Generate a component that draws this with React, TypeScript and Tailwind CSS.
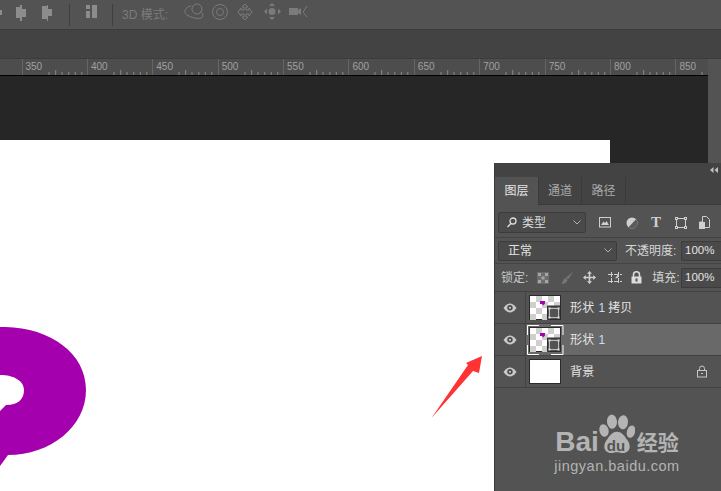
import React from 'react'

const cjk = "font-['Liberation_Sans','Noto_Sans_CJK_SC',sans-serif]"

const rulerMarks = [350, 400, 450, 500, 550, 600, 650, 700, 750, 800, 850]

const RulerSegment = ({ value }: { value: number }) => (
  <div className="relative h-full w-[65.4px] shrink-0 border-l border-[#656565]">
    <span className="absolute left-[3px] top-[1px] text-[10px] leading-[14px] text-[#a0a0a0]">{value}</span>
    <svg className="absolute bottom-0 left-0" width="65" height="6">
      {[6.5, 13, 19.5, 26, 32.7, 39, 45.8, 52.3, 58.8].map((x, i) =>
        i < 3 ? null : <line key={x} x1={x} x2={x} y1={i === 4 ? 1 : 3} y2={6} stroke="#8a8a8a" />
      )}
    </svg>
  </div>
)

const ToolbarIcons = () => (
  <svg className="absolute left-0 top-0" width="320" height="29" fill="none">
    <g fill="#8c8c8c">
      <rect x="0" y="10" width="2" height="5" />
      <rect x="16" y="7" width="4" height="11" />
      <rect x="22" y="9" width="4" height="8" />
      <rect x="20" y="5" width="2" height="16" />
      <rect x="42" y="6" width="5" height="13" />
      <rect x="48" y="9" width="4" height="7" />
      <rect x="47" y="5" width="1" height="16" />
      <rect x="86" y="5" width="4" height="4" />
      <rect x="86" y="11" width="4" height="7" />
      <rect x="92" y="5" width="5" height="13" />
    </g>
    <g stroke="#7b7b7b">
      <circle cx="197" cy="9" r="5" />
      <path d="M191 6c-6 1-8 6-4 9l4 2c3 1 7 2 10 1 3-1 2-5-1-6" />
      <circle cx="220" cy="12" r="7.500" />
      <circle cx="220" cy="12" r="3.500" />
      <path d="M245 4l3 3h-2v3h3V8l3 4-3 4v-2h-3v3h2l-3 3-3-3h2v-3h-3v2l-3-4 3-4v2h3V7h-2z" />
    </g>
    <g fill="#7b7b7b">
      <path d="M272 3l3 3h-6zM272 20l3-3h-6zM264 11.500l3-3v6zM281 11.500l-3-3v6z" />
      <circle cx="272" cy="11.500" r="3.500" />
      <rect x="289" y="8" width="9" height="7" />
      <path d="M298 10l3-2v7l-3-2z" />
    </g>
    <path d="M307 6l-4 6 4 5" stroke="#7b7b7b" />
  </svg>
)

const Eye = () => (
  <svg width="14" height="10" viewBox="0 0 14 10">
    <path d="M0.500 5C3 1.500 5 0.500 7 0.500S11 1.500 13.500 5C11 8.500 9 9.500 7 9.500S3 8.500 0.500 5z" fill="#c9c9c9" />
    <circle cx="7" cy="4.800" r="2.700" fill="#4a4a4a" />
    <circle cx="7" cy="4.800" r="1.100" fill="#c9c9c9" />
  </svg>
)

const ShapeThumb = ({ selected }: { selected?: boolean }) => {
  const squares: React.ReactNode[] = []
  for (let r = 0; r < 4; r++) {
    for (let c = 0; c < 5; c++) {
      if ((r + c) % 2 === 1) {
        squares.push(<rect key={`${r}-${c}`} x={1 + c * 6} y={1 + r * 6} width="6" height="6" fill="#cfcfcf" />)
      }
    }
  }
  return (
    <div className="relative h-[26px] w-[33px]">
      <svg width="33" height="26" className="absolute left-0 top-0">
        <rect x="0.500" y="0.500" width="31" height="24" fill="#fff" stroke="#2b2b2b" />
        {squares}
        <path d="M11 6h5v2.500l-2 2-1-1.500h-2z" fill="#a400ad" />
        <path d="M18.500 24.500v-13.500h13v13.500z" fill="#535353" stroke="#2b2b2b" />
        <rect x="20.500" y="13.500" width="9" height="9" fill="none" stroke="#bdbdbd" />
        {[[20.500, 13.500], [29.500, 13.500], [20.500, 22.500], [29.500, 22.500]].map(([x, y]) => (
          <rect key={`${x}${y}`} x={x - 1} y={y - 1} width="2" height="2" fill="#d8d8d8" />
        ))}
      </svg>
      {selected && (
        <svg width="37" height="30" className="absolute -left-[2px] -top-[2px]" fill="none" stroke="#fff">
          <path d="M0.500 10V0.500H12M24 0.500H36V10M0.500 20V29.500H12M24 29.500H36V20" />
        </svg>
      )}
    </div>
  )
}

const LayerRow = ({
  selected,
  label,
  suffix,
  thumb,
  lock,
}: {
  selected?: boolean
  label: string
  suffix?: React.ReactNode
  thumb: React.ReactNode
  lock?: boolean
}) => (
  <div className={`flex h-[32px] items-center border-b border-[#414141] ${selected ? 'bg-[#696969]' : 'bg-[#535353]'}`}>
    <div className="flex h-full w-[31px] shrink-0 items-center justify-center border-r border-[#434343] bg-[#535353] pr-[1px]">
      <Eye />
    </div>
    <div className="ml-[3px] w-[41px] shrink-0">{thumb}</div>
    <span className="text-[12px] tracking-[0.3px] text-[#e4e4e4]">{label}</span>
    {suffix}
    {lock && (
      <svg className="ml-auto mr-[13px]" width="12" height="13" viewBox="0 0 12 13" fill="none" stroke="#c8c8c8">
        <rect x="1.500" y="5.500" width="9" height="6.500" />
        <path d="M3.500 5.500V3.500a2.500 2.500 0 015 0v2M5 8.500h2" />
      </svg>
    )}
  </div>
)

const FilterIcons = () => (
  <div className="ml-[13px] flex items-center gap-[11px]">
    <svg width="13" height="11" viewBox="0 0 13 11" fill="none">
      <rect x="0.500" y="0.500" width="11" height="9.500" stroke="#cfcfcf" />
      <path d="M2 8l2.500-3.500L6 6l1.500-2L10 8z" fill="#cfcfcf" />
    </svg>
    <svg className="ml-[3px]" width="12" height="12" viewBox="0 0 12 12">
      <circle cx="6" cy="6" r="5.500" fill="#cfcfcf" />
      <path d="M10 2.200A5.500 5.500 0 012.500 10.200z" fill="#5a5a5a" />
    </svg>
    <span className="ml-[2px] w-[13px] font-['Liberation_Serif',serif] text-[15px] font-bold leading-none text-[#cfcfcf]">T</span>
    <svg width="13" height="12" viewBox="0 0 13 12" fill="none" stroke="#cfcfcf">
      <rect x="1.500" y="1.500" width="9" height="9" />
      <rect x="0.500" y="0.500" width="2" height="2" fill="#535353" />
      <rect x="9.500" y="0.500" width="2" height="2" fill="#535353" />
      <rect x="0.500" y="9.500" width="2" height="2" fill="#535353" />
      <rect x="9.500" y="9.500" width="2" height="2" fill="#535353" />
    </svg>
    <svg width="11" height="13" viewBox="0 0 11 13">
      <path d="M3.500 0.500h4l3 3v8h-10V6h3z" fill="none" stroke="#cfcfcf" />
      <rect x="0" y="6" width="6" height="7" fill="#cfcfcf" />
    </svg>
  </div>
)

const LockIcons = () => (
  <div className="ml-[9px] flex items-center gap-[9px]">
    <svg width="12" height="12" viewBox="0 0 12 12">
      <rect width="12" height="12" fill="#6d6d6d" />
      <path d="M1 1h3v3H1zM8 1h3v3H8zM4.500 4.500h3v3h-3zM1 8h3v3H1zM8 8h3v3H8z" fill="#a5a5a5" />
    </svg>
    <svg className="ml-[3px]" width="13" height="14" viewBox="0 0 13 14">
      <path d="M12.500 0.500L5 6.500L7 8.500zM4.500 7L6.500 9C6 12 3 13.500 0.500 13C2 11.500 1.500 8 4.500 7z" fill="#757575" />
    </svg>
    <svg width="13" height="13" viewBox="0 0 13 13" fill="#cfcfcf">
      <path d="M6.500 0L9 2.800H7.300v2.900h2.900V4L13 6.500 10.200 9V7.300H7.300v2.900H9L6.500 13 4 10.200h1.700V7.300H2.800V9L0 6.500 2.800 4v1.700h2.900V2.800H4z" />
    </svg>
    <svg className="ml-[3px]" width="14" height="12" viewBox="0 0 14 12" fill="none" stroke="#cfcfcf">
      <path d="M0 2.500h14M0 9.500h14M3.500 0v12M10.500 0v12" strokeDasharray="5 1" />
      <path d="M7 6.500L10 2.500V6z" fill="#cfcfcf" stroke="none" />
    </svg>
    <svg width="11" height="13" viewBox="0 0 11 13">
      <path d="M2.500 6V3.800a3 3 0 016 0V6" fill="none" stroke="#dcdcdc" strokeWidth="1.500" />
      <rect x="0.500" y="5.500" width="10" height="7" fill="#dcdcdc" />
      <rect x="4.500" y="7.500" width="2" height="3" fill="#535353" />
    </svg>
  </div>
)

const BaiduMark = () => (
  <div className="absolute left-[57px] top-[251px] flex w-[130px] flex-col items-center text-[#b4b4b4]">
    <div className="flex h-[40px] items-end">
      <span className="-mb-px font-['Liberation_Sans',sans-serif] text-[28px] font-bold leading-[26px]">Bai</span>
      <div className="relative -ml-[1px] h-[40px] w-[37px]">
        <svg width="37" height="40" viewBox="0 0 37 34" preserveAspectRatio="none" fill="#b4b4b4" className="absolute left-0 top-0">
          <ellipse cx="14" cy="6.500" rx="5" ry="6" transform="rotate(-8 14 6.500)" />
          <ellipse cx="25" cy="7" rx="5" ry="6" transform="rotate(8 25 7)" />
          <ellipse cx="6" cy="14" rx="4.500" ry="5.500" transform="rotate(-25 6 14)" />
          <ellipse cx="33" cy="15" rx="4" ry="5.500" transform="rotate(25 33 15)" />
          <path d="M19 15c5 0 8 4 11 8 3 4 2 9-3 10-3 .500-5-.500-8-.500s-5 1-8 .500c-5-1-6-6-3-10 3-4 6-8 11-8z" />
        </svg>
        <span className="absolute left-[9px] top-[25px] font-['Liberation_Sans',sans-serif] text-[15px] font-bold leading-[13px] text-[#535353]">du</span>
      </div>
      <span className={`${cjk} -mb-px ml-[2px] text-[21px] font-bold leading-[24px]`}>经验</span>
    </div>
    <span className="mt-[4px] whitespace-nowrap font-['Liberation_Sans',sans-serif] text-[14.500px] leading-[16px] tracking-[0.5px]">jingyan.baidu.com</span>
  </div>
)

const LayersPanel = () => (
  <div className={`${cjk} absolute left-[494px] top-[163px] h-[328px] w-[227px] border-l border-[#3a3a3a] bg-[#535353]`}>
    <div className="flex h-[14px] items-center justify-end bg-[#434343] pr-[3px]">
      <svg width="8" height="6" viewBox="0 0 8 6" fill="#c0c0c0">
        <path d="M3.500 0v6L0 3zM8 0v6L4.500 3z" />
      </svg>
    </div>
    <div className="flex h-[28px] border-b border-[#3a3a3a] bg-[#434343] text-[12px]">
      <div className="-mb-px flex w-[44px] items-center justify-center border-r border-[#3a3a3a] bg-[#535353] text-[#e6e6e6]">图层</div>
      <div className="flex w-[43px] items-center justify-center border-r border-[#3a3a3a] text-[#aaaaaa]">通道</div>
      <div className="flex w-[44px] items-center justify-center border-r border-[#3a3a3a] text-[#aaaaaa]">路径</div>
    </div>
    <div className="flex h-[33px] items-center border-b border-[#434343] pl-[3px] pt-[3px]">
      <div className="flex h-[21px] w-[88px] items-center rounded-[2px] border border-[#3c3c3c] bg-[#4a4a4a] pl-[8px] text-[12px] text-[#dddddd]">
        <svg width="10" height="11" viewBox="0 0 10 11" fill="none" stroke="#dddddd" strokeWidth="1.300">
          <circle cx="6" cy="4" r="3" />
          <path d="M4 6.500L0.500 10" />
        </svg>
        <span className="ml-[5px]">类型</span>
        <svg className="ml-auto mr-[4px]" width="8" height="5" fill="none" stroke="#b0b0b0"><path d="M0.500 0.500L4 4l3.500-3.500" /></svg>
      </div>
      <FilterIcons />
    </div>
    <div className="flex h-[26px] items-center border-b border-[#434343] pl-[3px]">
      <div className="flex h-[20px] w-[119px] items-center rounded-[2px] border border-[#3c3c3c] bg-[#4a4a4a] pl-[9px] text-[12px] text-[#e4e4e4]">
        正常
        <svg className="ml-auto mr-[4px]" width="8" height="5" fill="none" stroke="#b0b0b0"><path d="M0.500 0.500L4 4l3.500-3.500" /></svg>
      </div>
      <span className="ml-[8px] whitespace-nowrap text-[12px] text-[#d6d6d6]">不透明度:</span>
      <div className="ml-auto flex h-[20px] w-[40px] items-center rounded-l-[2px] border border-r-0 border-[#3c3c3c] bg-[#4a4a4a] pl-[3px] font-['Liberation_Sans',sans-serif] text-[11.500px] text-[#e4e4e4]">100%</div>
    </div>
    <div className="flex h-[28px] items-center border-b border-[#414141] pl-[6px]">
      <span className="whitespace-nowrap text-[12px] text-[#c8c8c8]">锁定:</span>
      <LockIcons />
      <span className="ml-[10px] whitespace-nowrap text-[12px] text-[#d6d6d6]">填充:</span>
      <div className="ml-auto flex h-[20px] w-[40px] items-center rounded-l-[2px] border border-r-0 border-[#3c3c3c] bg-[#4a4a4a] pl-[3px] font-['Liberation_Sans',sans-serif] text-[11.500px] text-[#e4e4e4]">100%</div>
    </div>
    <LayerRow label="形状" suffix={<span className="ml-[4px] text-[12px] text-[#c5dcff]">1<span className="ml-[3px] text-[#e4e4e4]">拷贝</span></span>} thumb={<ShapeThumb />} />
    <LayerRow selected label="形状" suffix={<span className="ml-[4px] text-[12px] text-[#c5dcff]">1</span>} thumb={<ShapeThumb selected />} />
    <LayerRow
      label="背景"
      lock
      thumb={<div className="h-[25px] w-[32px] border border-[#2b2b2b] bg-white" />}
    />
    <BaiduMark />
  </div>
)

export default function App() {
  return (
    <div className={`${cjk} relative h-[491px] w-[721px] overflow-hidden bg-[#535353]`}>
      <div className="relative flex h-[30px] items-center border-b border-[#3c3c3c] bg-[#535353]">
        <ToolbarIcons />
        <div className="ml-[69px] h-[22px] w-px bg-[#3f3f3f]" />
        <div className="ml-[42px] h-[22px] w-px bg-[#3f3f3f]" />
        <span className="ml-[9px] whitespace-nowrap text-[12px] text-[#7b7b7b]">3D 模式:</span>
      </div>
      <div className="h-[29px] border-b border-[#3c3c3c] bg-[#434343]" />
      <div className="flex h-[17px] w-[708px] overflow-hidden border-b border-black bg-[#4d4d4d] font-['Liberation_Sans',sans-serif]">
        <div className="relative w-[21.500px] shrink-0" />
        {rulerMarks.map((m) => (
          <RulerSegment key={m} value={m} />
        ))}
      </div>
      <div className="flex h-[415px]">
        <div className="relative h-full w-[708px] bg-[#262626] pt-[64px]">
          <div className="relative h-[351px] w-[610px] overflow-hidden bg-white">
            <svg className="absolute left-0 top-[187px]" width="90" height="150" viewBox="0 0 90 150">
              <path
                d="M0 0C48 -1 86 25 86 63C86 100 50 128 8 128L0 139V84L6 78C18 78 24 72 24 63C24 54 14 48 0 48z"
                fill="#a400ad"
              />
            </svg>
            <svg className="absolute left-[430px] top-[210px]" width="60" height="70" viewBox="0 0 60 70">
              <path d="M1.500 68L38 15L36 13L52 6L49 23L43 21z" fill="#ff3333" />
            </svg>
          </div>
        </div>
      </div>
      <LayersPanel />
    </div>
  )
}
